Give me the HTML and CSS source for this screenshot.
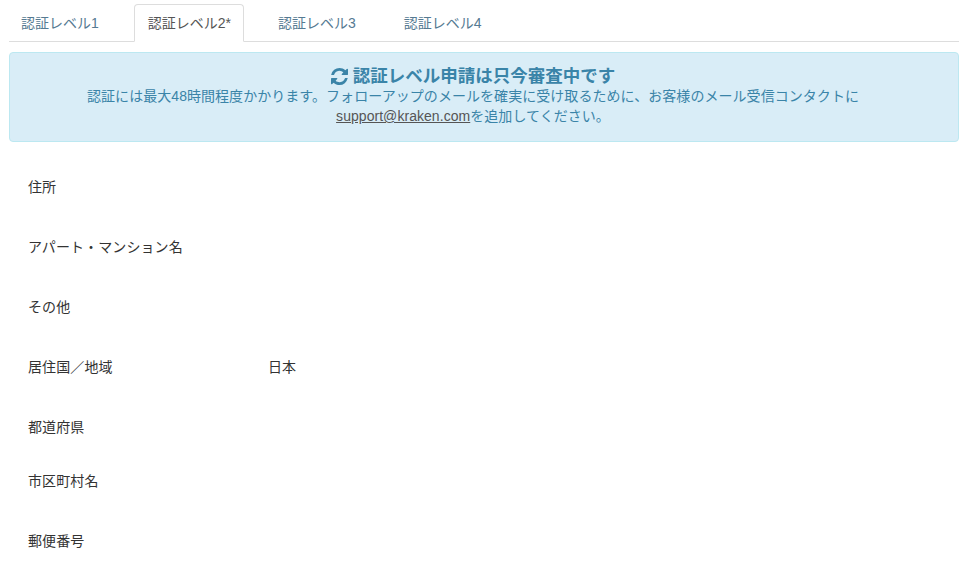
FILE: index.html
```html
<!DOCTYPE html>
<html lang="ja">
<head>
<meta charset="utf-8">
<title>認証レベル</title>
<link rel="stylesheet" href="styles.css">
</head>
<body>
<div class="page">
  <ul class="tabs">
    <li class="tab"><a>認証レベル1</a></li>
    <li class="tab active"><a>認証レベル2*</a></li>
    <li class="tab"><a>認証レベル3</a></li>
    <li class="tab"><a>認証レベル4</a></li>
  </ul>
  <div class="alert">
    <div class="alert-title">
      <svg class="refresh" viewBox="0 0 1536 1536" width="17" height="17" aria-hidden="true"><path fill="currentColor" d="M1511 928q0 5-1 7-64 268-268 434.500T764 1536q-146 0-282.500-55T238 1324l-129 129q-19 19-45 19t-45-19-19-45V960q0-26 19-45t45-19h448q26 0 45 19t19 45-19 45l-137 137q71 66 161 102t187 36q134 0 250-65t186-179q11-17 53-117 8-23 30-23h192q13 0 22.500 9.500t9.500 22.500zm25-800v448q0 26-19 45t-45 19h-448q-26 0-45-19t-19-45 19-45l138-138q-148-137-349-137-134 0-250 65T332 500q-11 17-53 117-8 23-30 23H50q-13 0-22.500-9.500T18 608v-7q65-268 270-434.500T768 0q146 0 284 55.500T1297 212l130-129q19-19 45-19t45 19 19 45z"/></svg>
      <span>認証レベル申請は只今審査中です</span>
    </div>
    <div class="alert-body">認証には最大48時間程度かかります。フォローアップのメールを確実に受け取るために、お客様のメール受信コンタクトに<br><a class="alert-link">support@kraken.com</a>を追加してください。</div>
  </div>
  <dl class="rows">
    <div class="row"><dt>住所</dt><dd></dd></div>
    <div class="row"><dt>アパート・マンション名</dt><dd></dd></div>
    <div class="row"><dt>その他</dt><dd></dd></div>
    <div class="row"><dt>居住国／地域</dt><dd>日本</dd></div>
    <div class="row short"><dt>都道府県</dt><dd></dd></div>
    <div class="row"><dt>市区町村名</dt><dd></dd></div>
    <div class="row"><dt>郵便番号</dt><dd></dd></div>
  </dl>
</div>
</body>
</html>
```
FILE: styles.css
```css
* { box-sizing: border-box; }
html, body { margin: 0; padding: 0; background: #fff; }
body {
  font-family: "Liberation Sans", "Noto Sans CJK JP", sans-serif;
  font-size: 14px;
  line-height: 20px;
  letter-spacing: 0.05px;
  color: #333;
  height: 575px;
  overflow: hidden;
}
.page { padding: 4px 12px 0 9px; }
.tabs {
  display: flex;
  list-style: none;
  margin: 0;
  padding: 0;
  height: 38px;
  border-bottom: 1px solid #ddd;
  letter-spacing: 0;
}
.tab { margin-right: 22px; margin-bottom: -1px; }
.tab a {
  display: block;
  height: 38px;
  padding: 8px 13px 8px 11px;
  border: 1px solid transparent;
  border-radius: 4px 4px 0 0;
  color: #557a92;
}
.tab.active { margin-left: -1px; }
.tab.active a {
  padding-left: 13px;
  padding-right: 12px;
  color: #555;
  background: #fff;
  border-color: #ddd #ddd #fff;
}
.alert {
  margin-top: 10px;
  height: 90px;
  padding: 13px 37px 0 15px;
  background: #d9edf7;
  border: 1px solid #bce8f1;
  border-radius: 4px;
  color: #3a84a8;
  text-align: center;
}
.alert-title {
  display: flex;
  justify-content: center;
  align-items: center;
  gap: 5px;
  font-size: 17.5px;
  font-weight: 700;
  line-height: 20px;
  letter-spacing: 0;
}
.alert-body { line-height: 20px; }
.alert-link { color: #555; text-decoration: underline; }
.rows { margin: 0; padding: 0 19px; letter-spacing: 0.1px; }
.row { display: flex; height: 60px; padding-top: 35px; margin: 0; }
.row.short { height: 54px; }
.row dt { width: 240px; font-weight: 400; }
.row dd { margin: 0; }
```
